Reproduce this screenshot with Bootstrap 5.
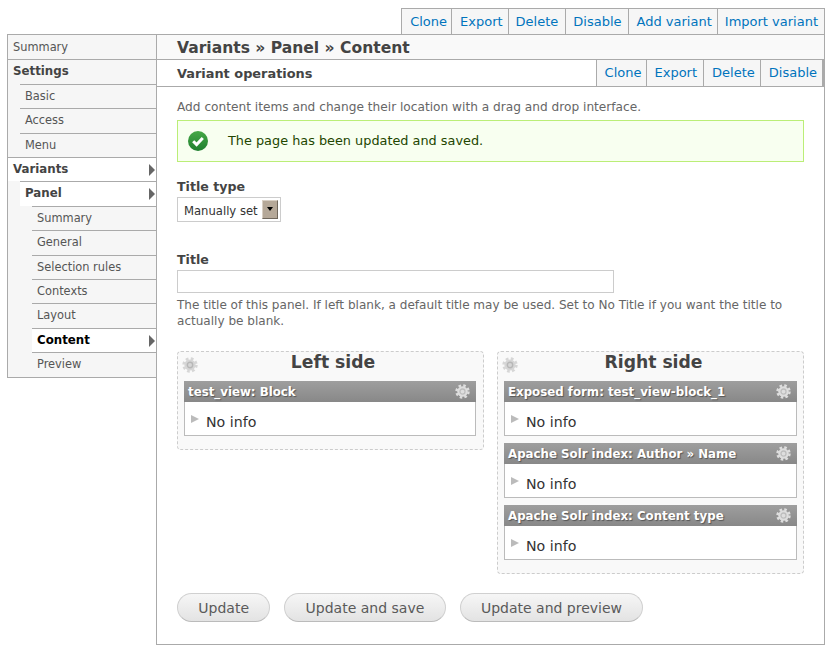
<!DOCTYPE html>
<html lang="en">
<head>
    <meta charset="UTF-8">
    <meta name="viewport" content="width=device-width, initial-scale=1.0">
    <title>Variants - Panel - Content</title>
    <link href="https://cdn.jsdelivr.net/npm/bootstrap@5.3.2/dist/css/bootstrap.min.css" rel="stylesheet">
    <style>
        body {
            background: #fff;
            color: #444;
            font-family: "DejaVu Sans", sans-serif;
            font-size: 13px;
            line-height: 1.2;
        }

        .page-wrap {
            padding: 8px 6px 0 7px;
        }

        /* tab style operation links */
        .op-links {
            display: flex;
            justify-content: flex-end;
            margin: 0;
            padding: 0;
            list-style: none;
        }

        .op-links a {
            display: block;
            background: #f6f6f6;
            color: #0074bd;
            text-decoration: none;
            border-left: 1px solid #aaa;
            white-space: nowrap;
        }

        .top-links a {
            border-top: 1px solid #aaa;
            height: 26px;
            line-height: 25px;
            padding: 0 6px 0 7px;
        }

        .top-links li:nth-child(1) a {
            padding: 0 4px 0 8px;
        }

        .top-links li:nth-child(2) a {
            padding: 0 5px 0 8px;
        }

        .top-links li:nth-child(3) a {
            padding: 0 7px;
        }

        .top-links a.wide-link {
            padding-left: 8px;
            padding-right: 5px;
        }

        .top-links li:last-child a {
            border-right: 1px solid #aaa;
            padding: 0 6px 0 7px;
        }

        .sub-links a {
            height: 26px;
            line-height: 26px;
            padding: 0 7px;
        }

        .sub-links li:nth-child(1) a {
            padding: 0 5px 0 8px;
        }

        .sub-links li:nth-child(2) a {
            padding: 0 6px 0 7px;
        }

        .sub-links li:nth-child(3) a {
            padding: 0 5px 0 8px;
        }

        .sub-links li:nth-child(4) a {
            border-right: 2px solid #aaa;
            padding: 0 5px 0 8px;
        }

        /* left tree */
        .side-tree {
            width: 149px;
            flex: none;
            align-self: flex-start;
            background: #f6f6f6;
            border: 1px solid #aaa;
            border-right: 0;
            font-size: 11.4px;
        }

        .side-tree ul {
            margin: 0 0 0 12px;
            padding: 0;
            list-style: none;
        }

        .side-tree > ul {
            margin-left: 0;
        }

        .side-tree a {
            display: block;
            position: relative;
            height: 24.42px;
            line-height: 23.4px;
            padding-left: 5px;
            color: #555;
            text-decoration: none;
            border-top: 1px solid #aaa;
        }

        .side-tree > ul > li:first-child > a {
            border-top: 0;
            height: 24.4px;
            line-height: 24.4px;
        }

        .side-tree a.is-group {
            font-size: 11.8px;
            font-weight: 700;
            color: #444;
        }

        .side-tree a.is-open {
            background: #fff;
        }

        .side-tree a.is-current {
            background: #fff;
            color: #000;
            font-size: 11.8px;
            font-weight: 700;
        }

        .side-tree a.is-open::after,
        .side-tree a.is-current::after {
            content: "";
            position: absolute;
            right: 1px;
            top: 6px;
            border-left: 6px solid #666;
            border-top: 6px solid transparent;
            border-bottom: 6px solid transparent;
        }

        /* main column */
        .main-box {
            flex: 1;
            height: 611px;
            border: 1px solid #aaa;
        }

        .title-row {
            height: 25px;
            background: #f9f9f9;
            border-bottom: 1px solid #aaa;
            padding-left: 20px;
            font-size: 15.55px;
            font-weight: 700;
            line-height: 26px;
        }

        .ops-row {
            height: 27px;
            border-bottom: 1px solid #aaa;
            padding-left: 20px;
        }

        .ops-row strong {
            font-size: 12.9px;
            line-height: 27px;
        }

        .box-body {
            padding: 12px 20px 0;
        }

        .intro-text {
            font-size: 12.16px;
            color: #666;
            height: 21px;
            line-height: 16px;
        }

        .saved-msg {
            display: flex;
            align-items: center;
            gap: 20px;
            height: 42px;
            margin: 0 0 16px;
            padding: 0 10px;
            background: #f8fff0;
            border: 1px solid #bbee77;
            border-radius: 0;
            color: #234600;
            font-size: 12.85px;
        }

        .field-label {
            display: block;
            font-size: 12.6px;
            font-weight: 700;
            margin-bottom: 1px;
            line-height: 18px;
        }

        .title-label {
            margin-top: 29px;
        }

        .select-wrap {
            position: relative;
            display: block;
            width: 104px;
            height: 25px;
        }

        .select-wrap select {
            appearance: none;
            width: 100%;
            height: 100%;
            padding: 2px 0 0 6px;
            background: #fff;
            border: 1px solid #ccc;
            border-radius: 0;
            color: #333;
            font: 11.6px "DejaVu Sans", sans-serif;
        }

        .select-arrow {
            position: absolute;
            top: 3px;
            right: 3px;
            width: 16px;
            height: 19px;
            background: #b5a898;
            border: 1px solid;
            border-color: #d8cfc4 #6f675c #6f675c #d8cfc4;
            pointer-events: none;
        }

        .select-arrow::after {
            content: "";
            position: absolute;
            left: 4px;
            top: 6px;
            border-top: 4px solid #000;
            border-left: 3px solid transparent;
            border-right: 3px solid transparent;
        }

        .title-input {
            display: block;
            width: 437px;
            height: 23px;
            padding: 0 4px;
            border: 1px solid #ccc;
            border-radius: 0;
        }

        .help-text {
            margin: 5px 0 0;
            font-size: 12.06px;
            color: #666;
            line-height: 15.6px;
        }

        .panel-grid {
            display: grid;
            grid-template-columns: 1fr 1fr;
            gap: 13px;
            align-items: start;
            margin-top: 22px;
        }

        .side-panel {
            position: relative;
            background: #f9f9f9;
            border: 1px dashed #ccc;
            border-radius: 4px;
            padding: 0 6px 13px;
        }

        .side-panel:first-child {
            padding-right: 7px;
        }

        .side-panel h2 {
            margin: 0;
            height: 29px;
            padding-left: 6px;
            color: #444;
            font-size: 17.2px;
            font-weight: 700;
            line-height: 20px;
            text-align: center;
        }

        .panel-gear {
            position: absolute;
            left: 4px;
            top: 5px;
            color: #d6d6d6;
        }

        .pane-box {
            background: #fff;
            border: 1px solid #bbb;
            border-top: 0;
            margin-bottom: 7px;
            height: 55px;
        }

        .side-panel .pane-box:last-child {
            margin-bottom: 0;
        }

        .pane-head {
            display: flex;
            justify-content: space-between;
            align-items: center;
            height: 21px;
            margin: 0 -1px;
            padding: 0 6px 0 4px;
            background: linear-gradient(#9e9e9e, #888);
            color: #fff;
            font-size: 11.8px;
            font-weight: 700;
            text-shadow: 1px 1px 1px #555;
        }

        .pane-gear {
            color: #dedede;
        }

        .pane-content {
            position: relative;
            padding: 12px 0 0 21px;
            color: #333;
            font-size: 14.2px;
            line-height: 17px;
        }

        .pane-content::before {
            content: "";
            position: absolute;
            left: 6px;
            top: 13px;
            border-left: 8px solid #bbb;
            border-top: 4px solid transparent;
            border-bottom: 4px solid transparent;
        }

        .form-btns {
            display: flex;
            gap: 14px;
            margin-top: 19px;
        }

        .form-btns .btn {
            height: 29px;
            padding: 0 20.3px;
            background: linear-gradient(#f6f6f6, #e3e3e3);
            border: 1px solid #d0d0d0;
            border-bottom-color: #bbb;
            border-radius: 15px;
            color: #5a5a5a;
            font-size: 14px;
            line-height: 26px;
        }
    </style>
</head>
<body>
    <svg width="0" height="0" class="position-absolute">
        <symbol id="gear" viewBox="0 0 16 16">
            <circle cx="8" cy="8" r="5.6" fill="currentColor"/>
            <circle cx="8" cy="8" r="6.4" fill="none" stroke="currentColor" stroke-width="2.6" stroke-dasharray="2.7 2.33"/>
            <circle cx="8" cy="8" r="2.7" fill="none" stroke="#000" stroke-opacity=".14" stroke-width="1.4"/>
        </symbol>
    </svg>

    <div class="page-wrap">
        <ul class="op-links top-links">
            <li><a href="#">Clone</a></li>
            <li><a href="#">Export</a></li>
            <li><a href="#">Delete</a></li>
            <li><a href="#">Disable</a></li>
            <li><a href="#" class="wide-link">Add variant</a></li>
            <li><a href="#" class="wide-link">Import variant</a></li>
        </ul>

        <div class="d-flex">
            <!-- Left tree -->
            <nav class="side-tree">
                <ul>
                    <li><a href="#">Summary</a></li>
                    <li>
                        <a href="#" class="is-group">Settings</a>
                        <ul>
                            <li><a href="#">Basic</a></li>
                            <li><a href="#">Access</a></li>
                            <li><a href="#">Menu</a></li>
                        </ul>
                    </li>
                    <li>
                        <a href="#" class="is-group is-open">Variants</a>
                        <ul>
                            <li>
                                <a href="#" class="is-group is-open">Panel</a>
                                <ul>
                                    <li><a href="#">Summary</a></li>
                                    <li><a href="#">General</a></li>
                                    <li><a href="#">Selection rules</a></li>
                                    <li><a href="#">Contexts</a></li>
                                    <li><a href="#">Layout</a></li>
                                    <li><a href="#" class="is-current">Content</a></li>
                                    <li><a href="#">Preview</a></li>
                                </ul>
                            </li>
                        </ul>
                    </li>
                </ul>
            </nav>

            <!-- Main column -->
            <div class="main-box">
                <div class="title-row">Variants » Panel » Content</div>
                <div class="ops-row d-flex justify-content-between">
                    <strong>Variant operations</strong>
                    <ul class="op-links sub-links">
                        <li><a href="#">Clone</a></li>
                        <li><a href="#">Export</a></li>
                        <li><a href="#">Delete</a></li>
                        <li><a href="#">Disable</a></li>
                    </ul>
                </div>

                <div class="box-body">
                    <div class="intro-text">Add content items and change their location with a drag and drop interface.</div>

                    <div class="alert saved-msg" role="alert">
                        <svg width="20" height="20" viewBox="0 0 20 20">
                            <defs>
                                <linearGradient id="okFill" x1="0" y1="0" x2="0" y2="1">
                                    <stop offset="0" stop-color="#46a846"/>
                                    <stop offset="1" stop-color="#1f7f2f"/>
                                </linearGradient>
                            </defs>
                            <circle cx="10" cy="10" r="10" fill="url(#okFill)"/>
                            <path d="M5.2 10.2 8.6 13.6 14.8 7" fill="none" stroke="#fff" stroke-width="3"/>
                        </svg>
                        <span>The page has been updated and saved.</span>
                    </div>

                    <label class="field-label" for="titleType">Title type</label>
                    <div class="select-wrap">
                        <select id="titleType">
                            <option>Manually set</option>
                        </select>
                        <span class="select-arrow"></span>
                    </div>

                    <label class="field-label title-label" for="titleField">Title</label>
                    <input id="titleField" type="text" class="title-input">
                    <p class="help-text">The title of this panel. If left blank, a default title may be used. Set to No Title if you want the title to actually be blank.</p>

                    <div class="panel-grid">
                        <section class="side-panel">
                            <svg class="panel-gear" width="16" height="16"><use href="#gear"/></svg>
                            <h2>Left side</h2>
                            <div class="pane-box">
                                <div class="pane-head">
                                    <span>test_view: Block</span>
                                    <svg width="15" height="15" class="pane-gear"><use href="#gear"/></svg>
                                </div>
                                <div class="pane-content">No info</div>
                            </div>
                        </section>

                        <section class="side-panel">
                            <svg class="panel-gear" width="16" height="16"><use href="#gear"/></svg>
                            <h2>Right side</h2>
                            <div class="pane-box">
                                <div class="pane-head">
                                    <span>Exposed form: test_view-block_1</span>
                                    <svg width="15" height="15" class="pane-gear"><use href="#gear"/></svg>
                                </div>
                                <div class="pane-content">No info</div>
                            </div>
                            <div class="pane-box">
                                <div class="pane-head">
                                    <span>Apache Solr index: Author » Name</span>
                                    <svg width="15" height="15" class="pane-gear"><use href="#gear"/></svg>
                                </div>
                                <div class="pane-content">No info</div>
                            </div>
                            <div class="pane-box">
                                <div class="pane-head">
                                    <span>Apache Solr index: Content type</span>
                                    <svg width="15" height="15" class="pane-gear"><use href="#gear"/></svg>
                                </div>
                                <div class="pane-content">No info</div>
                            </div>
                        </section>
                    </div>

                    <div class="form-btns">
                        <button type="button" class="btn">Update</button>
                        <button type="button" class="btn">Update and save</button>
                        <button type="button" class="btn">Update and preview</button>
                    </div>
                </div>
            </div>
        </div>
    </div>

    <script src="https://cdn.jsdelivr.net/npm/bootstrap@5.3.2/dist/js/bootstrap.bundle.min.js"></script>
</body>
</html>
